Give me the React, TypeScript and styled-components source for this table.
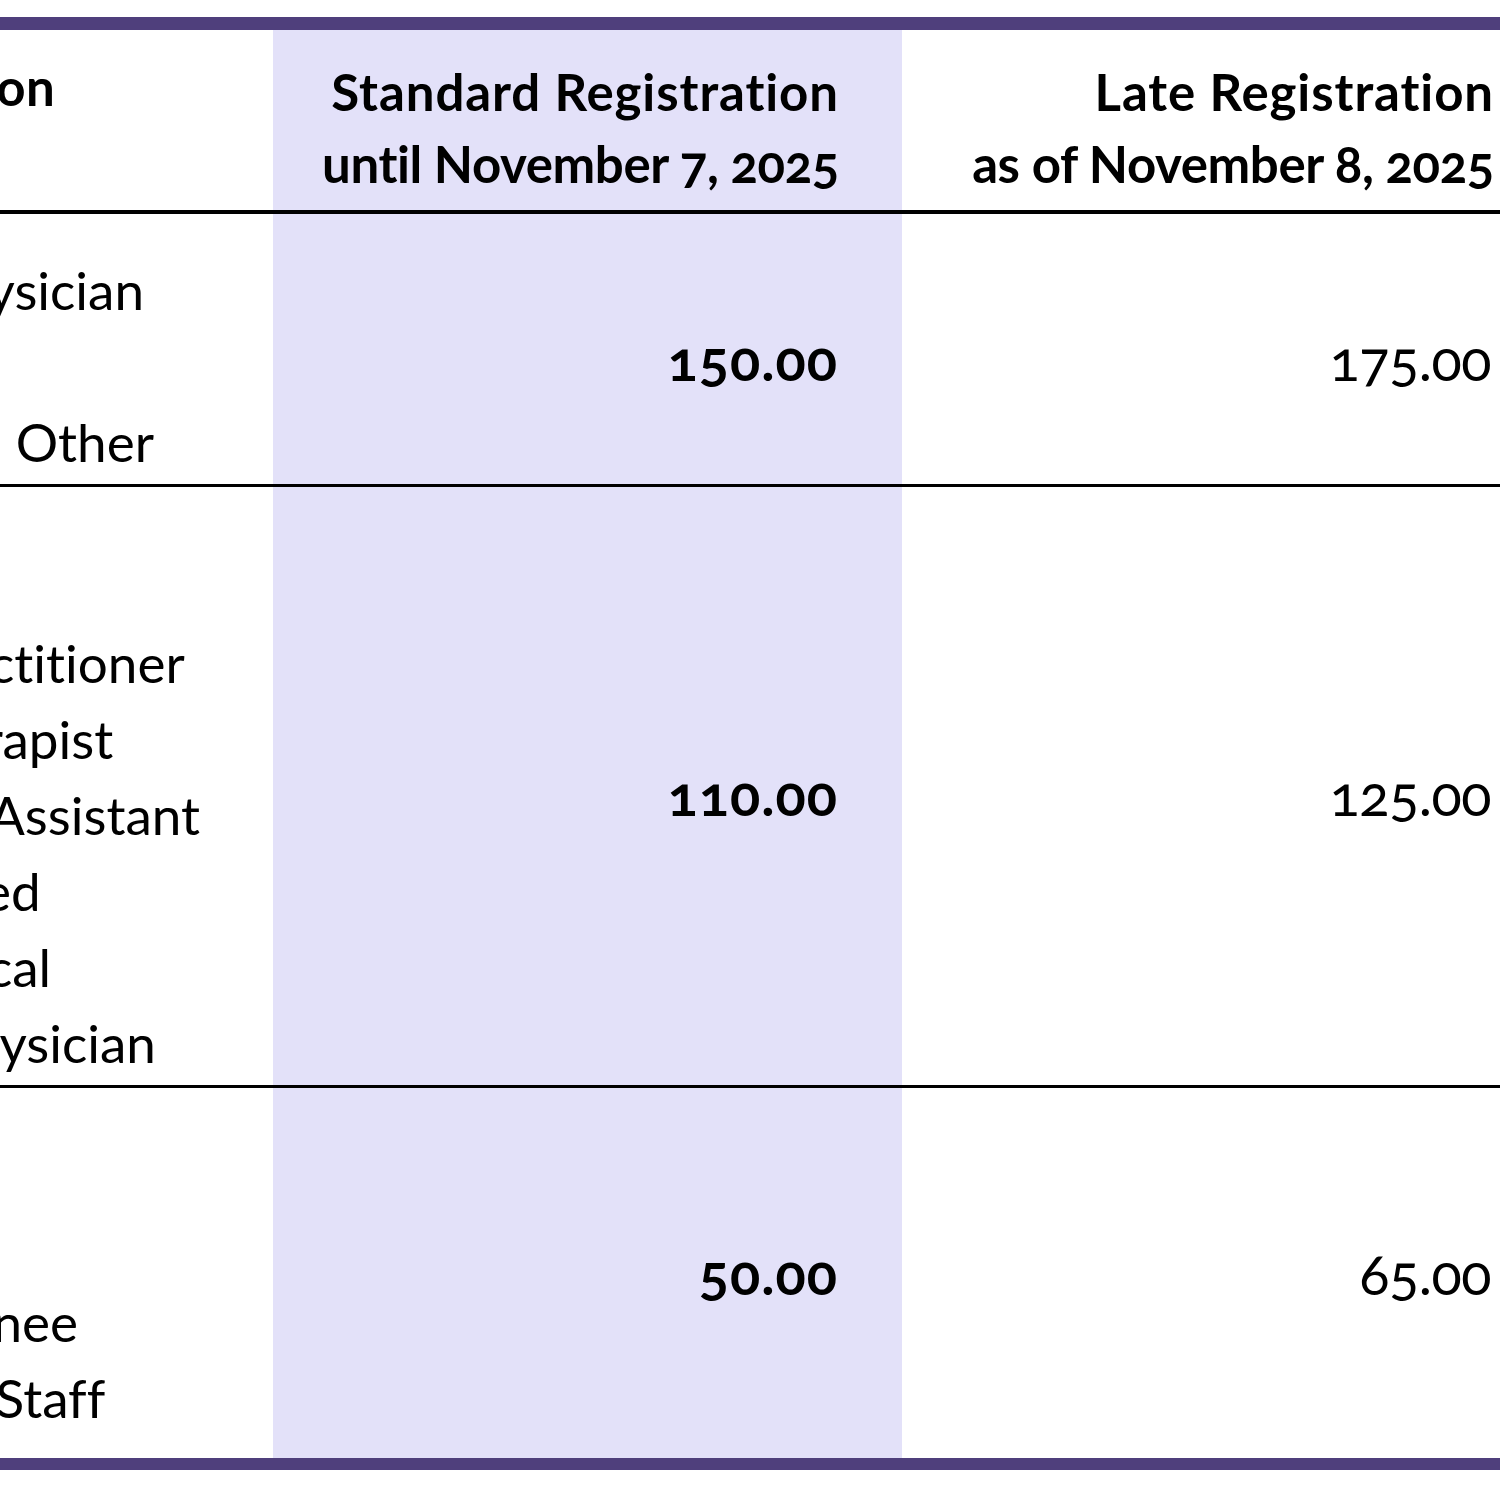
import React from "react";
import styled, { createGlobalStyle } from "styled-components";

const GlobalStyle = createGlobalStyle`
  html, body {
    margin: 0;
    padding: 0;
    background: #ffffff;
    overflow: hidden;
  }
  body {
    font-family: Lato, "Open Sans", "Noto Sans", sans-serif;
    color: #000;
    font-variant-ligatures: no-common-ligatures;
  }
`;

const PURPLE = "#4f3f7c";
const SHADE = "#e3e1f9";

const Page = styled.div`
  width: 1500px;
  height: 1486px;
  padding-top: 17px;
  box-sizing: border-box;
  overflow: hidden;
`;

const Table = styled.div`
  display: grid;
  grid-template-columns: 573px 629px 598px;
  grid-template-rows: 184px 273px 601px 370px;
  margin-left: -300px;
  width: 1800px;
  border-top: 13px solid ${PURPLE};
  border-bottom: 12px solid ${PURPLE};
  font-variant-numeric: oldstyle-nums;
  font-feature-settings: "onum" 1, "liga" 0;
`;

const Cell = styled.div<{ $shaded?: boolean; $rule?: number }>`
  background: ${(p) => (p.$shaded ? SHADE : "transparent")};
  border-bottom: ${(p) => (p.$rule ? `${p.$rule}px solid #000` : "none")};
  min-width: 0;
`;

const HeadCell = styled(Cell)<{ $padRight: number }>`
  display: flex;
  flex-direction: column;
  align-items: flex-end;
  padding: 26px ${(p) => p.$padRight}px 0 0;
  font-size: 51px;
  font-weight: 700;
  line-height: 72px;
  white-space: nowrap;
`;

const HeadLine = styled.span<{ $first?: boolean }>`
  letter-spacing: ${(p) => (p.$first ? "0.9px" : "-0.4px")};
`;

const LabelHead = styled(Cell)`
  padding: 21px 0 0 0;
  text-indent: -4px;
  font-size: 51px;
  font-weight: 700;
  letter-spacing: 0.3px;
  line-height: 72px;
  white-space: nowrap;
  overflow: hidden;
`;

const LabelCell = styled(Cell)<{ $padBottom: number }>`
  display: flex;
  flex-direction: column;
  justify-content: flex-end;
  padding-bottom: ${(p) => p.$padBottom}px;
  text-indent: -4px;
  font-size: 53px;
  font-weight: 400;
  line-height: 76px;
  white-space: nowrap;
  overflow: hidden;
`;

const Line = styled.div`
  height: 76px;
`;

const PriceCell = styled(Cell)<{ $bold?: boolean; $padRight: number; $shift: number }>`
  display: flex;
  align-items: center;
  justify-content: flex-end;
  padding-right: ${(p) => p.$padRight}px;
  padding-top: ${(p) => p.$shift}px;
  font-size: 56px;
  font-weight: ${(p) => (p.$bold ? 700 : 400)};
  letter-spacing: ${(p) => (p.$bold ? "1px" : "-0.5px")};
  white-space: nowrap;
`;

type Row = {
  lines: string[];
  padBottom: number;
  standard: string;
  late: string;
  shift: number;
  rule: number;
};

const rows: Row[] = [
  {
    lines: ["Specialist Physician", "Dentist", "Audiologist – Other"],
    padBottom: 4,
    standard: "150.00",
    late: "175.00",
    shift: 20,
    rule: 3,
  },
  {
    lines: [
      "Nurse",
      "Pharmacist",
      "Licensed Practitioner",
      "Physical Therapist",
      "Anaesthesia Assistant",
      "RN, Registered",
      "Pharmaceutical",
      "Attending Physician",
    ],
    padBottom: 4,
    standard: "110.00",
    late: "125.00",
    shift: 16,
    rule: 3,
  },
  {
    lines: ["Student", "Retiree", "Resident Trainee", "Non-Clinical Staff"],
    padBottom: 22,
    standard: "50.00",
    late: "65.00",
    shift: 0,
    rule: 0,
  },
];

export default function App() {
  return (
    <>
      <GlobalStyle />
      <Page>
        <Table>
          <LabelHead $rule={4}>Your Profession</LabelHead>
          <HeadCell $shaded $rule={4} $padRight={63}>
            <HeadLine $first>Standard Registration</HeadLine>
            <HeadLine>until November 7, 2025</HeadLine>
          </HeadCell>
          <HeadCell $rule={4} $padRight={6}>
            <HeadLine $first>Late Registration</HeadLine>
            <HeadLine>as of November 8, 2025</HeadLine>
          </HeadCell>
          {rows.map((r) => (
            <React.Fragment key={r.standard}>
              <LabelCell $rule={r.rule} $padBottom={r.padBottom}>
                {r.lines.map((l) => (
                  <Line key={l}>{l}</Line>
                ))}
              </LabelCell>
              <PriceCell $shaded $bold $rule={r.rule} $padRight={64} $shift={r.shift}>
                {r.standard}
              </PriceCell>
              <PriceCell $rule={r.rule} $padRight={9} $shift={r.shift}>
                {r.late}
              </PriceCell>
            </React.Fragment>
          ))}
        </Table>
      </Page>
    </>
  );
}
